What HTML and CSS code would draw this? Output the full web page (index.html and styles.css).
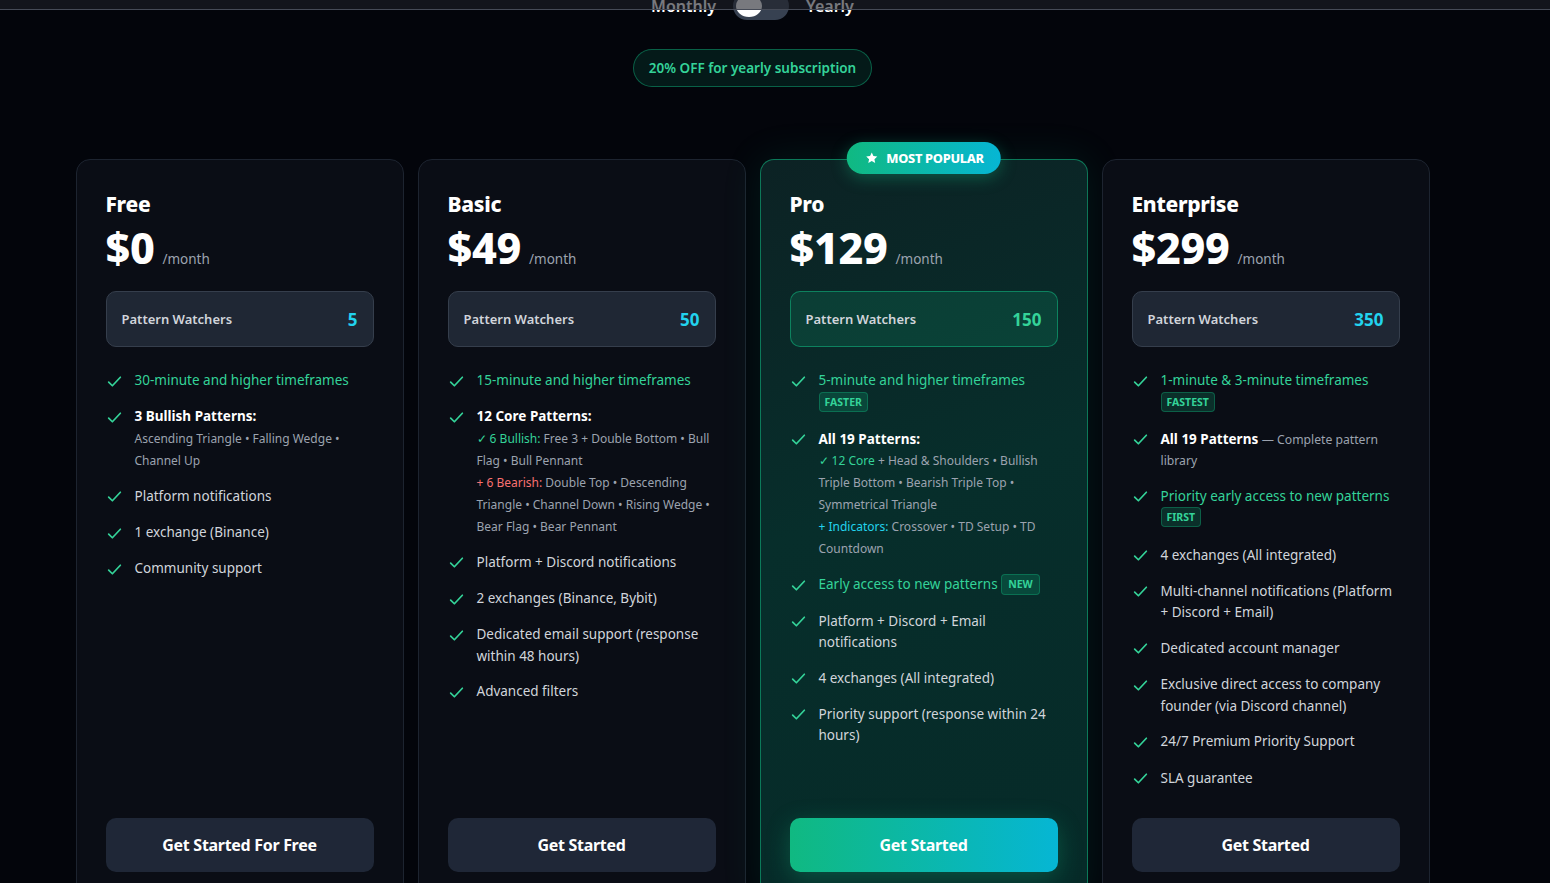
FILE: index.html
```html
<!DOCTYPE html>
<html lang="en">
<head>
<meta charset="utf-8">
<title>Pricing</title>
<link rel="stylesheet" href="styles.css">
</head>
<body>
<div class="topbar"></div>
<main class="page">
  <div class="billing-toggle">
    <span class="billing-label">Monthly</span>
    <span class="switch"><span class="knob"></span></span>
    <span class="billing-label">Yearly</span>
  </div>
  <div class="discount">20% OFF for yearly subscription</div>

  <div class="plans">
    <!-- Free -->
    <section class="card">
      <h3 class="plan-name">Free</h3>
      <div class="price"><span class="amount">$0</span><span class="period">/month</span></div>
      <div class="watchers"><span class="watchers-label">Pattern Watchers</span><span class="watchers-num">5</span></div>
      <ul class="features">
        <li><span class="chk"><svg viewBox="0 0 16 16"><path d="M2.5 8.5 6 12 13.5 4"/></svg></span><div class="ft"><span class="green">30-minute and higher timeframes</span></div></li>
        <li><span class="chk"><svg viewBox="0 0 16 16"><path d="M2.5 8.5 6 12 13.5 4"/></svg></span><div class="ft"><strong>3 Bullish Patterns:</strong><span class="detail">Ascending Triangle • Falling Wedge • Channel Up</span></div></li>
        <li><span class="chk"><svg viewBox="0 0 16 16"><path d="M2.5 8.5 6 12 13.5 4"/></svg></span><div class="ft">Platform notifications</div></li>
        <li><span class="chk"><svg viewBox="0 0 16 16"><path d="M2.5 8.5 6 12 13.5 4"/></svg></span><div class="ft">1 exchange (Binance)</div></li>
        <li><span class="chk"><svg viewBox="0 0 16 16"><path d="M2.5 8.5 6 12 13.5 4"/></svg></span><div class="ft">Community support</div></li>
      </ul>
      <button class="cta">Get Started For Free</button>
    </section>

    <!-- Basic -->
    <section class="card">
      <h3 class="plan-name">Basic</h3>
      <div class="price"><span class="amount">$49</span><span class="period">/month</span></div>
      <div class="watchers"><span class="watchers-label">Pattern Watchers</span><span class="watchers-num">50</span></div>
      <ul class="features">
        <li><span class="chk"><svg viewBox="0 0 16 16"><path d="M2.5 8.5 6 12 13.5 4"/></svg></span><div class="ft"><span class="green">15-minute and higher timeframes</span></div></li>
        <li><span class="chk"><svg viewBox="0 0 16 16"><path d="M2.5 8.5 6 12 13.5 4"/></svg></span><div class="ft"><strong>12 Core Patterns:</strong><span class="detail"><span class="green">✓ 6 Bullish:</span> Free 3 + Double Bottom • Bull Flag • Bull Pennant</span><span class="detail"><span class="red">+ 6 Bearish:</span> Double Top • Descending Triangle • Channel Down • Rising Wedge • Bear Flag • Bear Pennant</span></div></li>
        <li><span class="chk"><svg viewBox="0 0 16 16"><path d="M2.5 8.5 6 12 13.5 4"/></svg></span><div class="ft">Platform + Discord notifications</div></li>
        <li><span class="chk"><svg viewBox="0 0 16 16"><path d="M2.5 8.5 6 12 13.5 4"/></svg></span><div class="ft">2 exchanges (Binance, Bybit)</div></li>
        <li><span class="chk"><svg viewBox="0 0 16 16"><path d="M2.5 8.5 6 12 13.5 4"/></svg></span><div class="ft">Dedicated email support (response within 48 hours)</div></li>
        <li><span class="chk"><svg viewBox="0 0 16 16"><path d="M2.5 8.5 6 12 13.5 4"/></svg></span><div class="ft">Advanced filters</div></li>
      </ul>
      <button class="cta">Get Started</button>
    </section>

    <!-- Pro -->
    <section class="card card-pro">
      <div class="popular"><svg viewBox="0 0 24 24"><path d="M12 2.5l2.9 6.1 6.6.8-4.9 4.6 1.3 6.6L12 17.3l-5.9 3.3 1.3-6.6-4.9-4.6 6.6-.8z"/></svg>MOST POPULAR</div>
      <h3 class="plan-name">Pro</h3>
      <div class="price"><span class="amount">$129</span><span class="period">/month</span></div>
      <div class="watchers watchers-pro"><span class="watchers-label">Pattern Watchers</span><span class="watchers-num">150</span></div>
      <ul class="features">
        <li><span class="chk"><svg viewBox="0 0 16 16"><path d="M2.5 8.5 6 12 13.5 4"/></svg></span><div class="ft"><span class="green">5-minute and higher timeframes</span><span class="tag tag-block">FASTER</span></div></li>
        <li><span class="chk"><svg viewBox="0 0 16 16"><path d="M2.5 8.5 6 12 13.5 4"/></svg></span><div class="ft"><strong>All 19 Patterns:</strong><span class="detail"><span class="green">✓ 12 Core</span> + Head &amp; Shoulders • Bullish Triple Bottom • Bearish Triple Top • Symmetrical Triangle</span><span class="detail"><span class="cyan">+ Indicators:</span> Crossover • TD Setup • TD Countdown</span></div></li>
        <li><span class="chk"><svg viewBox="0 0 16 16"><path d="M2.5 8.5 6 12 13.5 4"/></svg></span><div class="ft"><span class="green">Early access to new patterns</span> <span class="tag tag-inline">NEW</span></div></li>
        <li><span class="chk"><svg viewBox="0 0 16 16"><path d="M2.5 8.5 6 12 13.5 4"/></svg></span><div class="ft">Platform + Discord + Email notifications</div></li>
        <li><span class="chk"><svg viewBox="0 0 16 16"><path d="M2.5 8.5 6 12 13.5 4"/></svg></span><div class="ft">4 exchanges (All integrated)</div></li>
        <li><span class="chk"><svg viewBox="0 0 16 16"><path d="M2.5 8.5 6 12 13.5 4"/></svg></span><div class="ft">Priority support (response within 24 hours)</div></li>
      </ul>
      <button class="cta cta-pro">Get Started</button>
    </section>

    <!-- Enterprise -->
    <section class="card">
      <h3 class="plan-name">Enterprise</h3>
      <div class="price"><span class="amount">$299</span><span class="period">/month</span></div>
      <div class="watchers"><span class="watchers-label">Pattern Watchers</span><span class="watchers-num">350</span></div>
      <ul class="features">
        <li><span class="chk"><svg viewBox="0 0 16 16"><path d="M2.5 8.5 6 12 13.5 4"/></svg></span><div class="ft"><span class="green">1-minute &amp; 3-minute timeframes</span><span class="tag tag-block">FASTEST</span></div></li>
        <li><span class="chk"><svg viewBox="0 0 16 16"><path d="M2.5 8.5 6 12 13.5 4"/></svg></span><div class="ft"><strong>All 19 Patterns</strong> <span class="muted">— Complete pattern library</span></div></li>
        <li><span class="chk"><svg viewBox="0 0 16 16"><path d="M2.5 8.5 6 12 13.5 4"/></svg></span><div class="ft"><span class="green">Priority early access to new patterns</span><span class="tag tag-block">FIRST</span></div></li>
        <li><span class="chk"><svg viewBox="0 0 16 16"><path d="M2.5 8.5 6 12 13.5 4"/></svg></span><div class="ft">4 exchanges (All integrated)</div></li>
        <li><span class="chk"><svg viewBox="0 0 16 16"><path d="M2.5 8.5 6 12 13.5 4"/></svg></span><div class="ft">Multi-channel notifications (Platform + Discord + Email)</div></li>
        <li><span class="chk"><svg viewBox="0 0 16 16"><path d="M2.5 8.5 6 12 13.5 4"/></svg></span><div class="ft">Dedicated account manager</div></li>
        <li><span class="chk"><svg viewBox="0 0 16 16"><path d="M2.5 8.5 6 12 13.5 4"/></svg></span><div class="ft">Exclusive direct access to company founder (via Discord channel)</div></li>
        <li><span class="chk"><svg viewBox="0 0 16 16"><path d="M2.5 8.5 6 12 13.5 4"/></svg></span><div class="ft">24/7 Premium Priority Support</div></li>
        <li><span class="chk"><svg viewBox="0 0 16 16"><path d="M2.5 8.5 6 12 13.5 4"/></svg></span><div class="ft">SLA guarantee</div></li>
      </ul>
      <button class="cta">Get Started</button>
    </section>
  </div>
</main>
</body>
</html>
```

FILE: styles.css
```css
* { box-sizing: border-box; }

html, body {
  margin: 0;
  padding: 0;
  height: 100%;
  overflow: hidden;
  background: #03050b;
}

body {
  font-family: "Noto Sans", "Open Sans", sans-serif;
  color: #d1d5db;
}

.topbar {
  position: fixed;
  top: 0;
  left: 0;
  right: 0;
  height: 10px;
  background: rgba(30, 32, 40, 0.6);
  border-bottom: 1px solid #464b57;
  z-index: 10;
}

.page {
  width: 1505px;
  display: flex;
  flex-direction: column;
  align-items: center;
}

.billing-toggle {
  margin-top: -8px;
  display: flex;
  align-items: center;
  gap: 17px;
}

.billing-label {
  font-size: 16px;
  font-weight: 600;
  color: #ffffff;
}

.switch {
  width: 56px;
  height: 28px;
  border-radius: 14px;
  background: #374151;
  padding: 3px;
  display: flex;
}

.knob {
  width: 26px;
  height: 22px;
  border-radius: 50%;
  background: #ffffff;
}

.discount {
  margin-top: 29px;
  height: 38px;
  padding: 0 15px;
  display: flex;
  align-items: center;
  border-radius: 19px;
  background: rgba(16, 185, 129, 0.12);
  border: 1px solid rgba(16, 185, 129, 0.45);
  color: #34d399;
  font-size: 13.5px;
  font-weight: 600;
}

.plans {
  margin-top: 72px;
  display: flex;
  gap: 14px;
}

.card {
  position: relative;
  width: 328px;
  padding: 29px 29px 30px;
  border-radius: 14px;
  background: #0a0d15;
  border: 1px solid #1d2430;
  display: flex;
  flex-direction: column;
}

.card-pro {
  background: linear-gradient(160deg, #0c2224 0%, #072e2b 45%, #062a28 100%);
  border: 1px solid rgba(16, 185, 129, 0.55);
  box-shadow: 0 0 40px rgba(16, 185, 129, 0.12);
}

.popular {
  position: absolute;
  top: -18px;
  left: 50%;
  transform: translateX(-50%);
  height: 32px;
  padding: 0 17px 0 18px;
  display: flex;
  align-items: center;
  gap: 8px;
  border-radius: 16px;
  background: linear-gradient(90deg, #10b981, #06b6d4);
  color: #fff;
  font-size: 12.8px;
  font-weight: 800;
  letter-spacing: -0.3px;
  white-space: nowrap;
  box-shadow: 0 4px 16px rgba(16, 185, 129, 0.35);
}

.popular svg {
  width: 14px;
  height: 14px;
  fill: #fff;
}

.plan-name {
  margin: 0;
  font-size: 21px;
  line-height: 30px;
  font-weight: 800;
  color: #ffffff;
  letter-spacing: -0.3px;
}

.price {
  margin-top: 5px;
  display: flex;
  align-items: baseline;
  gap: 8px;
}

.amount {
  font-size: 43px;
  line-height: 48px;
  font-weight: 800;
  color: #ffffff;
  letter-spacing: -0.3px;
}

.period {
  font-size: 13.5px;
  color: #9ca3af;
}

.watchers {
  margin-top: 19px;
  height: 56px;
  padding: 0 15px;
  display: flex;
  align-items: center;
  justify-content: space-between;
  border-radius: 10px;
  background: #1f2734;
  border: 1px solid #353e4c;
}

.watchers-pro {
  background: rgba(16, 185, 129, 0.16);
  border: 1px solid rgba(16, 185, 129, 0.55);
}

.watchers-label {
  font-size: 13px;
  font-weight: 600;
  color: #d1d5db;
}

.watchers-num {
  font-size: 17px;
  font-weight: 700;
  color: #22d3ee;
}

.watchers-pro .watchers-num { color: #34d399; }

.features {
  list-style: none;
  margin: 23px 0 28px;
  padding: 0;
  display: flex;
  flex-direction: column;
  gap: 14.2px;
}

.features li {
  display: flex;
  gap: 12px;
  align-items: flex-start;
}

.chk {
  flex: none;
  width: 17px;
  height: 22px;
  display: flex;
  align-items: center;
}

.chk svg {
  width: 17px;
  height: 17px;
  fill: none;
  stroke: #34d399;
  stroke-width: 1.6;
  stroke-linecap: round;
  stroke-linejoin: round;
}

.ft {
  font-size: 13.5px;
  line-height: 21.5px;
  color: #d1d5db;
}

.ft strong {
  font-weight: 700;
  color: #ffffff;
}

.detail {
  display: block;
  font-size: 12px;
  line-height: 22px;
  color: #9ca3af;
}

.muted {
  font-size: 12.2px;
  color: #9ca3af;
}

.green { color: #34d399; }
.red { color: #f87171; }
.cyan { color: #22d3ee; }

.tag {
  display: inline-block;
  font-size: 10.5px;
  line-height: 18px;
  font-weight: 700;
  padding: 0 5px;
  border-radius: 4px;
  color: #34d399;
  background: rgba(16, 185, 129, 0.2);
  border: 1px solid rgba(16, 185, 129, 0.35);
}

.tag-inline {
  line-height: 19px;
  padding: 0 6px;
  vertical-align: 1px;
}

.tag-block {
  display: table;
  margin-top: 0;
  margin-bottom: 3px;
}

.cta {
  margin-top: auto;
  height: 54px;
  width: 100%;
  border: none;
  border-radius: 10px;
  background: #1f2737;
  color: #ffffff;
  font-family: "Noto Sans", "Open Sans", sans-serif;
  font-size: 16px;
  font-weight: 700;
  letter-spacing: -0.3px;
}

.cta-pro {
  background: linear-gradient(90deg, #10b981, #06b6d4);
  box-shadow: 0 6px 24px rgba(16, 185, 129, 0.3);
}
```
